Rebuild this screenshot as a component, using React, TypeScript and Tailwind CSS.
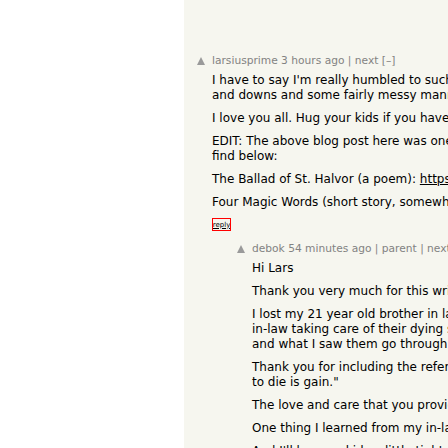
import React from 'react';

const Vote = () => (
  <div className="w-[15px] shrink-0 flex justify-start pt-[3px]">
    <div className="w-0 h-0 border-l-[4px] border-r-[4px] border-b-[8px] border-l-transparent border-r-transparent border-b-[#9a9a9a]" />
  </div>
);

const Header = ({ children }: { children: React.ReactNode }) => (
  <div className="text-[10.67px] leading-[14px] text-[#828282]">{children}</div>
);

const App = () => {
  return (
    <div
      className="flex w-[448px] h-[448px] overflow-hidden bg-white whitespace-nowrap"
      style={{ fontFamily: '"DejaVu Sans", Verdana, sans-serif' }}
    >
      <div className="w-[184px] shrink-0 bg-white" />
      <div className="flex-1 bg-[#f6f6ef] overflow-hidden pt-[54px]">
        {/* comment 1 */}
        <div className="flex pl-[13px]">
          <Vote />
          <div>
            <Header>larsiusprime 3 hours ago | next [–]</Header>
            <div className="mt-[5px] text-[12px] leading-[15px] text-black flex flex-col gap-2">
              <p>
                I have to say I'm really humbled to such an outpouring of support.
                <br />
                and downs and some fairly messy manners, but
              </p>
              <p>I love you all. Hug your kids if you have them.</p>
              <p>
                EDIT: The above blog post here was one of several
                <br />
                find below:
              </p>
              <p>
                The Ballad of St. Halvor (a poem): <span className="underline">https://www.fortressofdoors.com</span>
              </p>
              <p>Four Magic Words (short story, somewhat autobiographical)</p>
            </div>
            <div className="mt-[8px] w-[19px] h-[13px] border border-[#ff0000] flex items-center justify-center overflow-hidden">
              <span className="text-[7px] leading-[8px] underline text-black">reply</span>
            </div>
          </div>
        </div>

        {/* comment 2 */}
        <div className="flex pl-[53px] mt-[11px]">
          <Vote />
          <div>
            <Header>debok 54 minutes ago | parent | next [–]</Header>
            <div className="mt-[5px] text-[12px] leading-[15px] text-black flex flex-col gap-2">
              <p>Hi Lars</p>
              <p>Thank you very much for this write-up.</p>
              <p>
                I lost my 21 year old brother in law to cancer a few years ago.
                <br />
                in-law taking care of their dying son was heartbreaking,
                <br />
                and what I saw them go through has stayed with me.
              </p>
              <p>
                Thank you for including the reference "For to me to live is Christ, and
                <br />
                to die is gain."
              </p>
              <p>The love and care that you provided was beautiful.</p>
              <p>One thing I learned from my in-laws is that</p>
              <p>And I'll hug my kids a little tighter tonight.</p>
            </div>
          </div>
        </div>
      </div>
    </div>
  );
};

export default App;
